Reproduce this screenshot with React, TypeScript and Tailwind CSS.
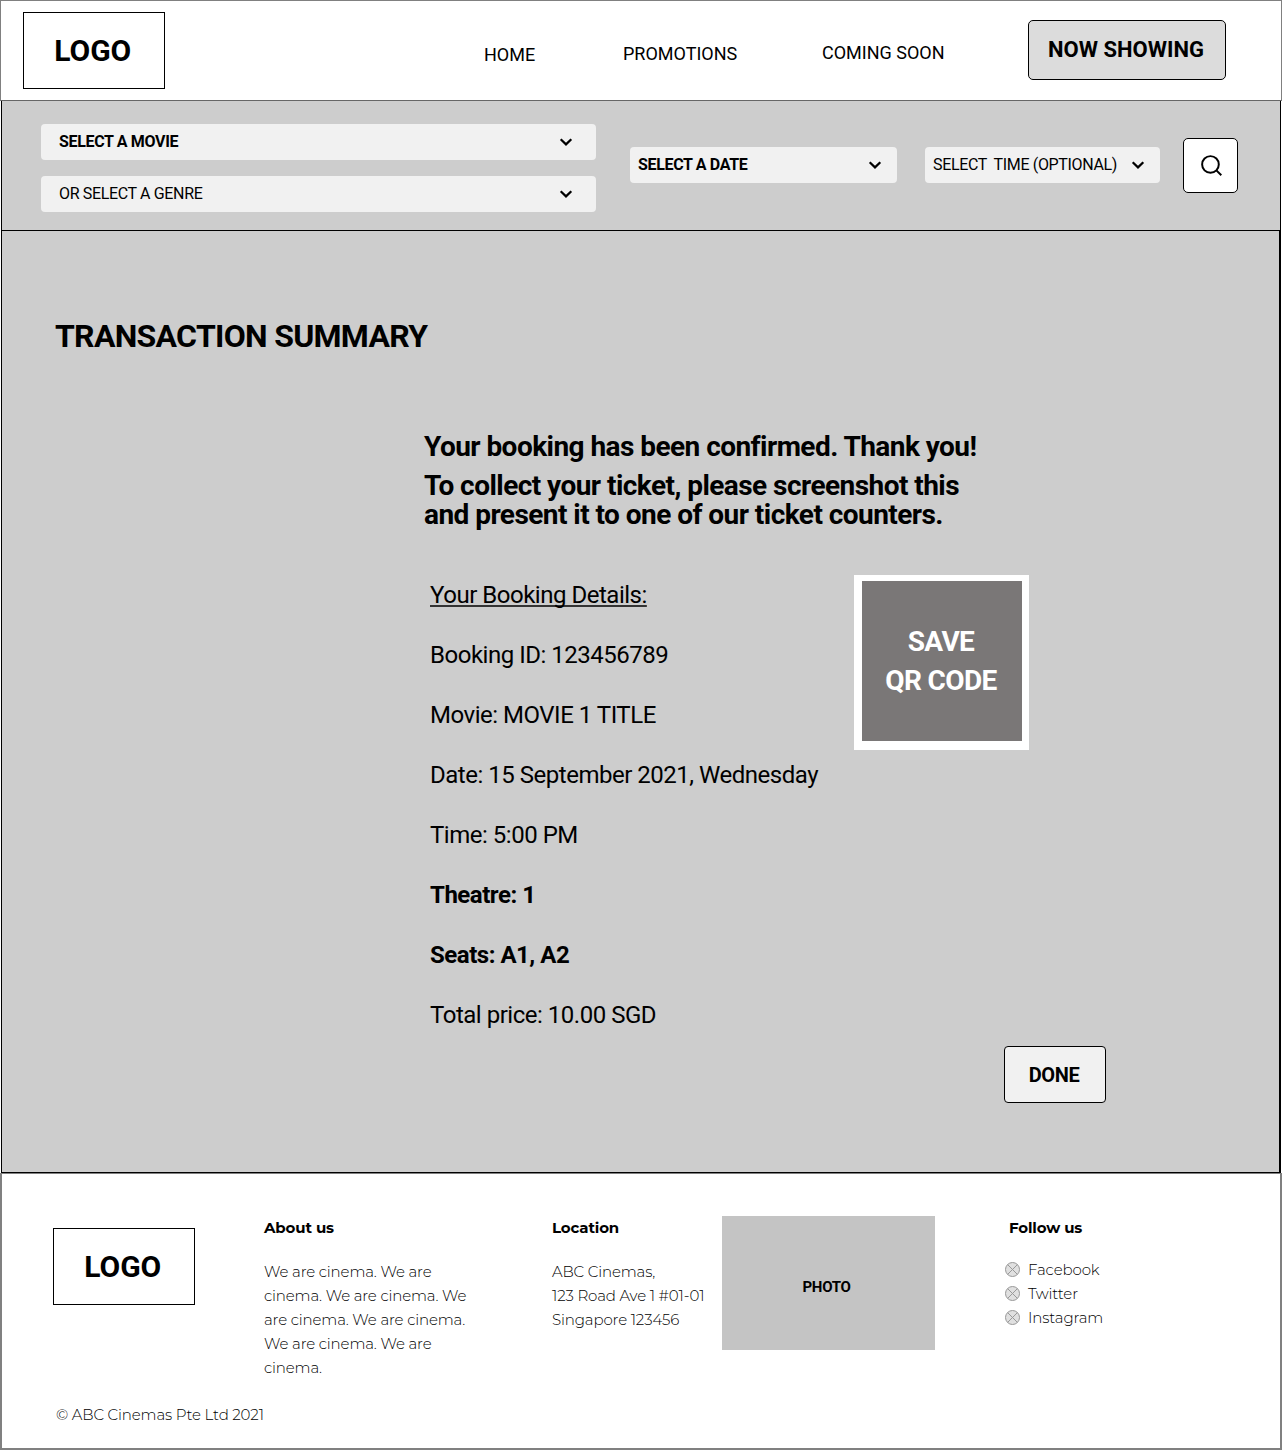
import React from "react";

function LogoBox({ className }: { className: string }) {
  return (
    <div
      className={`flex h-[77px] w-[142px] shrink-0 items-center justify-center border border-black bg-white pr-[2.5px] text-[30px] leading-none font-bold ${className}`}
    >
      LOGO
    </div>
  );
}

function Chevron() {
  return (
    <svg width="20" height="20" viewBox="0 0 20 20" fill="none" stroke="#000" strokeWidth="2.2" className="shrink-0">
      <path d="M4.7 7.2 10 12.4l5.3-5.2" />
    </svg>
  );
}

function Select({ label, className }: { label: string; className: string }) {
  return (
    <button
      className={`flex h-9 items-center justify-between rounded bg-[#f1f1f1] text-base leading-none tracking-[-0.0215em] whitespace-pre ${className}`}
    >
      <span>{label}</span>
      <Chevron />
    </button>
  );
}

function SearchIcon() {
  return (
    <svg width="25" height="25" viewBox="0 0 24 24" fill="none" stroke="#000" strokeWidth="1.9">
      <circle cx="11" cy="11" r="8" />
      <path d="m21.4 21.4-4.7-4.7" />
    </svg>
  );
}

function CircleX() {
  return (
    <svg width="15" height="15" viewBox="0 0 15 15" fill="#e0e0e0" stroke="#999" strokeWidth="1" className="-mt-0.5 shrink-0">
      <circle cx="7.5" cy="7.5" r="7" />
      <path d="m2.6 2.6 9.8 9.8M12.4 2.6l-9.8 9.8" />
    </svg>
  );
}

const details = [
  { text: "Your Booking Details:", underline: true },
  { text: "Booking ID: 123456789" },
  { text: "Movie: MOVIE 1 TITLE" },
  { text: "Date: 15 September 2021, Wednesday" },
  { text: "Time: 5:00 PM" },
  { text: "Theatre: 1", bold: true },
  { text: "Seats: A1, A2", bold: true },
  { text: "Total price: 10.00 SGD" },
];

const aboutLines = [
  "We are cinema. We are",
  "cinema. We are cinema. We",
  "are cinema. We are cinema.",
  "We are cinema. We are",
  "cinema.",
];

const locationLines = ["ABC Cinemas,", "123 Road Ave 1 #01-01", "Singapore 123456"];

function FooterColumn({ title, lines, className }: { title: string; lines: string[]; className: string }) {
  return (
    <div className={`shrink-0 pt-[42px] whitespace-nowrap ${className}`}>
      <h3 className="font-bold leading-6">{title}</h3>
      <div className="mt-5 font-light">
        {lines.map((line, i) => (
          <p key={i}>{line}</p>
        ))}
      </div>
    </div>
  );
}

export default function App() {
  return (
    <div className="h-[1450px] w-[1282px] overflow-hidden bg-white font-['Roboto',sans-serif] text-black">
      <header className="flex h-[101px] border border-[#808080] border-b-[#666] bg-white">
        <LogoBox className="mt-[11px] ml-[22px]" />
        <nav className="flex w-[863px] shrink-0 text-lg leading-6 whitespace-nowrap">
          <a className="mt-[42px] ml-[319px] w-[139px]">HOME</a>
          <a className="mt-[41px] w-[199px]">PROMOTIONS</a>
          <a className="mt-10">COMING SOON</a>
        </nav>
        <button className="mt-[19px] flex h-[60px] w-[198px] items-center justify-center rounded-[5px] border border-black bg-[#dcdcdc] pr-0.5 pb-px text-[22px] leading-none font-bold whitespace-nowrap">
          NOW SHOWING
        </button>
      </header>

      <section className="mr-px ml-px flex h-[130px] border-x border-b border-black bg-[#cdcdcd]">
        <div className="mt-[23px] ml-[39px] flex w-[555px] shrink-0 flex-col gap-4">
          <Select label="SELECT A MOVIE" className="pr-5 pl-[18px] font-bold" />
          <Select label="OR SELECT A GENRE" className="pr-5 pl-[18px]" />
        </div>
        <Select label="SELECT A DATE" className="mt-[46px] ml-[34px] w-[267px] shrink-0 pr-3 pl-2 font-bold" />
        <Select label="SELECT  TIME (OPTIONAL)" className="mt-[46px] ml-7 w-[235px] shrink-0 pr-3 pl-2" />
        <button className="mt-[37px] ml-[23px] flex h-[55px] w-[55px] shrink-0 items-center justify-center rounded-[5px] border border-black bg-white pl-0.5">
          <SearchIcon />
        </button>
      </section>

      <main className="mr-px ml-px h-[942px] border-r-2 border-b border-l border-black bg-[#cdcdcd]">
        <h1 className="ml-[53px] pt-[85px] text-[32px] leading-10 font-bold tracking-[-0.022em]">TRANSACTION SUMMARY</h1>
        <div className="ml-[422px] pt-[76px] text-[28px] leading-[29px] font-bold tracking-[-0.0195em] whitespace-nowrap">
          <p>Your booking has been confirmed. Thank you!</p>
          <p className="mt-2.5">
            To collect your ticket, please screenshot this
            <br />
            and present it to one of our ticket counters.
          </p>
        </div>
        <div className="mt-9 ml-[428px] flex">
          <ul className="w-[424px] shrink-0 text-2xl leading-[60px] tracking-[-0.02em] whitespace-nowrap">
            {details.map((d) => (
              <li
                key={d.text}
                className={
                  d.underline
                    ? "underline decoration-[#333] decoration-[1.5px] underline-offset-[2px] [text-decoration-skip-ink:none]"
                    : d.bold
                      ? "font-bold"
                      : ""
                }
              >
                {d.text}
              </li>
            ))}
          </ul>
          <div className="mt-2.5 h-[175px] w-[175px] shrink-0 bg-white pt-1.5 pl-2">
            <button className="flex h-40 w-40 flex-col items-center justify-center bg-[#7a7777] pr-0.5 text-[28px] leading-[39px] font-bold tracking-[-0.022em] text-white">
              <span>SAVE</span>
              <span>QR CODE</span>
            </button>
          </div>
        </div>
        <button className="mt-[1px] ml-[1002px] flex h-[57px] w-[102px] items-center justify-center rounded border border-black bg-[#f1f1f1] pt-px pr-0.5 text-xl leading-none font-bold tracking-[-0.02em]">
          DONE
        </button>
      </main>

      <footer className="h-[277px] border-2 border-t border-[#808080] bg-white font-['Montserrat',sans-serif] text-[15px] leading-6 tracking-[-0.009em]">
        <div className="flex h-[229px]">
          <LogoBox className="mt-[54px] ml-[51px] font-['Roboto',sans-serif] tracking-normal" />
          <FooterColumn title="About us" lines={aboutLines} className="ml-[69px] w-[288px]" />
          <FooterColumn title="Location" lines={locationLines} className="w-[170px]" />
          <div className="mt-[42px] flex h-[134px] w-[213px] shrink-0 items-center justify-center bg-[#c4c4c4] pt-2 pr-1 font-['Roboto',sans-serif] font-bold tracking-[-0.02em]">
            PHOTO
          </div>
          <div className="ml-[70px] pt-[42px] font-light">
            <h3 className="pl-1 font-bold">Follow us</h3>
            <ul className="mt-[18px]">
              {["Facebook", "Twitter", "Instagram"].map((name) => (
                <li key={name} className="flex items-center gap-2">
                  <CircleX />
                  {name}
                </li>
              ))}
            </ul>
          </div>
        </div>
        <p className="ml-[54px] font-light">© ABC Cinemas Pte Ltd 2021</p>
      </footer>
    </div>
  );
}
